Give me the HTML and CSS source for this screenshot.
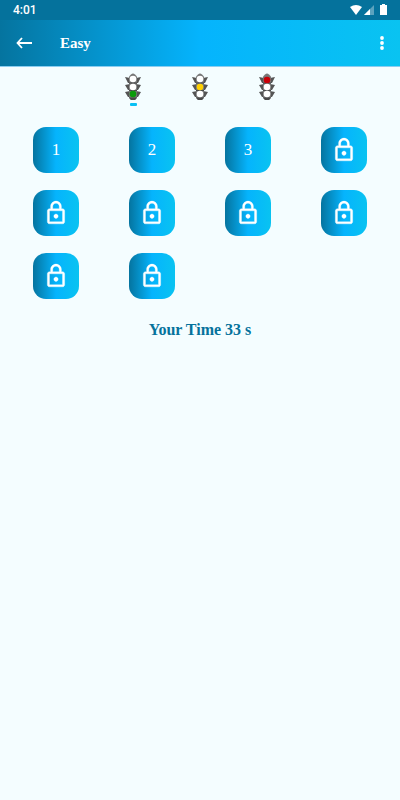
FILE: index.html
```html
<!DOCTYPE html>
<html lang="en">
<head>
    <meta charset="UTF-8">
    <meta name="viewport" content="width=device-width, initial-scale=1.0">
    <title>Easy</title>
    <link rel="stylesheet" href="styles.css">
</head>
<body>
    <svg class="sprites" aria-hidden="true">
        <symbol id="lock" viewBox="0 0 24 24">
            <path fill="currentColor" stroke="currentColor" stroke-width=".3" d="M18 8h-1V6c0-2.76-2.24-5-5-5S7 3.24 7 6v2H6c-1.1 0-2 .9-2 2v10c0 1.1.9 2 2 2h12c1.1 0 2-.9 2-2V10c0-1.1-.9-2-2-2zM9 6c0-1.66 1.34-3 3-3s3 1.34 3 3v2H9V6zm9 14H6V10h12v10zm-6-3c1.1 0 2-.9 2-2s-.9-2-2-2-2 .9-2 2 .9 2 2 2z"/>
        </symbol>
        <symbol id="housing" viewBox="0 0 16 28">
            <path fill="#555" d="M0 4l5 1v5H3zM16 4l-5 1v5h2zM0 12l5-1v6H3zM16 12l-5-1v6h2zM0 19l5-1v6H3zM16 19l-5-1v6h2z"/>
            <path fill="#777" d="M6 1.500Q8-.5 10 1.500l2 2V25l-2 2H6l-2-2V3.500z"/>
            <path fill="#4a4a4a" d="M4 9.500h8v1H4zM4 17h8v1H4zM4 24.500h8L10 27H6z"/>
        </symbol>
    </svg>

    <div class="status-bar">
        <span>4:01</span>
        <svg width="38" height="12" viewBox="0 0 38 12" fill="#fff" aria-hidden="true">
            <path d="M0 3Q6-1 12 3L6 11z"/>
            <path opacity=".35" d="M24 1v10H14z"/>
            <path d="M20 5v6h-6z"/>
            <path d="M32 1V0h3v1h2v10h-7V1z"/>
        </svg>
    </div>

    <header class="app-bar">
        <button class="icon-button" type="button" aria-label="Back">
            <svg width="16" height="12" viewBox="0 0 16 12" fill="none" stroke="#fff" stroke-width="1.800"><path d="M16 6H1.500M6 1L1.500 6 6 11"/></svg>
        </button>
        <h1>Easy</h1>
        <button class="icon-button menu" type="button" aria-label="More options">
            <svg width="4" height="14" viewBox="0 0 4 14" fill="#fff"><circle cx="2" cy="2" r="1.9"/><circle cx="2" cy="7" r="1.9"/><circle cx="2" cy="12" r="1.9"/></svg>
        </button>
    </header>

    <nav class="tabs">
        <button class="tab active" type="button" aria-label="Easy">
            <svg width="16" height="28" viewBox="0 0 16 28"><use href="#housing"/><circle cx="8" cy="6" r="3.300" fill="#fff"/><circle cx="8" cy="14" r="3.300" fill="#fff"/><circle cx="8" cy="21" r="3.300" fill="#0b9a0b"/></svg>
        </button>
        <button class="tab" type="button" aria-label="Medium">
            <svg width="16" height="28" viewBox="0 0 16 28"><use href="#housing"/><circle cx="8" cy="6" r="3.300" fill="#fff"/><circle cx="8" cy="14" r="3.300" fill="#ffd000"/><circle cx="8" cy="21" r="3.300" fill="#fff"/></svg>
        </button>
        <button class="tab" type="button" aria-label="Hard">
            <svg width="16" height="28" viewBox="0 0 16 28"><use href="#housing"/><circle cx="8" cy="7" r="3.300" fill="#c90008"/><circle cx="8" cy="14" r="3.300" fill="#fff"/><circle cx="8" cy="21" r="3.300" fill="#fff"/></svg>
        </button>
    </nav>

    <main>
        <div class="levels">
            <button class="level" type="button">1</button>
            <button class="level" type="button">2</button>
            <button class="level" type="button">3</button>
            <button class="level" type="button" aria-label="Level 4, locked"><svg><use href="#lock"/></svg></button>
            <button class="level" type="button" aria-label="Level 5, locked"><svg><use href="#lock"/></svg></button>
            <button class="level" type="button" aria-label="Level 6, locked"><svg><use href="#lock"/></svg></button>
            <button class="level" type="button" aria-label="Level 7, locked"><svg><use href="#lock"/></svg></button>
            <button class="level" type="button" aria-label="Level 8, locked"><svg><use href="#lock"/></svg></button>
            <button class="level" type="button" aria-label="Level 9, locked"><svg><use href="#lock"/></svg></button>
            <button class="level" type="button" aria-label="Level 10, locked"><svg><use href="#lock"/></svg></button>
        </div>
        <p class="time">Your Time 33 s</p>
    </main>
</body>
</html>
```

FILE: styles.css
```css
* {
    box-sizing: border-box;
}
body {
    margin: 0;
    background: #f4fdff;
    font-family: "Liberation Serif", serif;
}
button {
    padding: 0;
    border: 0;
    background: none;
    color: #fff;
    font-family: inherit;
    cursor: pointer;
}
svg {
    display: block;
}
.sprites {
    width: 0;
    height: 0;
}
.status-bar {
    display: flex;
    justify-content: space-between;
    align-items: center;
    height: 20px;
    padding: 0 12px 0 13px;
    background: #05729c;
    color: #fff;
    font-family: Roboto, sans-serif;
    font-size: 12px;
    font-weight: 500;
}
.app-bar {
    display: flex;
    align-items: center;
    height: 47px;
    padding: 0 8px;
    border-bottom: 1px solid #8bcdf0;
    background: linear-gradient(90deg, #05749f, #05b4fd 50%, #09c3f1);
}
.app-bar h1 {
    margin: 0 0 0 20px;
    color: #fff;
    font-size: 15px;
    line-height: 20px;
}
.icon-button {
    display: flex;
    justify-content: center;
    align-items: center;
    width: 32px;
    height: 32px;
}
.menu {
    width: 20px;
    margin-left: auto;
}
.tabs {
    display: flex;
    width: 50%;
    margin: 0 auto;
}
.tab {
    flex: 1;
    display: flex;
    flex-direction: column;
    align-items: center;
    gap: 2px;
    height: 40px;
    padding-top: 6px;
}
.tab.active::after {
    content: "";
    width: 7px;
    height: 3px;
    border-radius: 1px;
    background: #09c0f4;
}
main {
    padding: 20px 8px;
}
.levels {
    display: grid;
    grid-template-columns: repeat(4, 1fr);
    justify-items: center;
    row-gap: 17px;
}
.level {
    display: flex;
    justify-content: center;
    align-items: center;
    width: 46px;
    height: 46px;
    border-radius: 13px;
    background: linear-gradient(90deg, #05749f, #05b4fd 50%, #09c3f1);
    font-size: 17px;
}
.level svg {
    width: 26px;
    height: 26px;
}
.time {
    margin: 21px 0 0;
    color: #05729c;
    font-size: 16px;
    font-weight: bold;
    line-height: 20px;
    text-align: center;
}
```
